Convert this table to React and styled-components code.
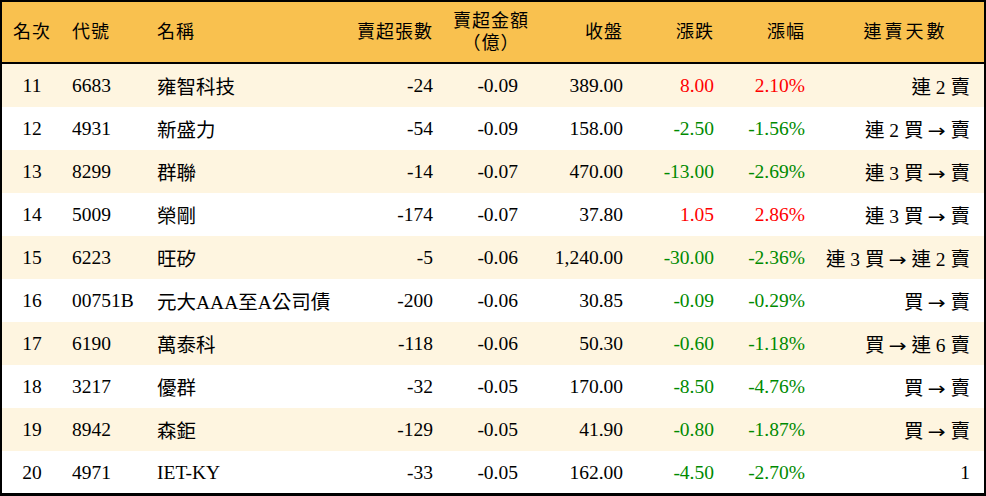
import React from "react";
import styled, { createGlobalStyle } from "styled-components";

const rows = [
    { rank: 11, code: "6683", name: "雍智科技", lots: "-24", amount: "-0.09", close: "389.00", change: "8.00", pct: "2.10%", streak: "連 2 賣" },
    { rank: 12, code: "4931", name: "新盛力", lots: "-54", amount: "-0.09", close: "158.00", change: "-2.50", pct: "-1.56%", streak: "連 2 買 → 賣" },
    { rank: 13, code: "8299", name: "群聯", lots: "-14", amount: "-0.07", close: "470.00", change: "-13.00", pct: "-2.69%", streak: "連 3 買 → 賣" },
    { rank: 14, code: "5009", name: "榮剛", lots: "-174", amount: "-0.07", close: "37.80", change: "1.05", pct: "2.86%", streak: "連 3 買 → 賣" },
    { rank: 15, code: "6223", name: "旺矽", lots: "-5", amount: "-0.06", close: "1,240.00", change: "-30.00", pct: "-2.36%", streak: "連 3 買 → 連 2 賣" },
    { rank: 16, code: "00751B", name: "元大AAA至A公司債", lots: "-200", amount: "-0.06", close: "30.85", change: "-0.09", pct: "-0.29%", streak: "買 → 賣" },
    { rank: 17, code: "6190", name: "萬泰科", lots: "-118", amount: "-0.06", close: "50.30", change: "-0.60", pct: "-1.18%", streak: "買 → 連 6 賣" },
    { rank: 18, code: "3217", name: "優群", lots: "-32", amount: "-0.05", close: "170.00", change: "-8.50", pct: "-4.76%", streak: "買 → 賣" },
    { rank: 19, code: "8942", name: "森鉅", lots: "-129", amount: "-0.05", close: "41.90", change: "-0.80", pct: "-1.87%", streak: "買 → 賣" },
    { rank: 20, code: "4971", name: "IET-KY", lots: "-33", amount: "-0.05", close: "162.00", change: "-4.50", pct: "-2.70%", streak: "1" },
];

const widths = [60, 85, 196, 100, 100, 90, 91, 91, 169];

function tone(v) {
    return v.startsWith("-") ? "down" : "up";
}

function Streak({ text }) {
    const parts = text.split(" → ");
    return parts.map((p, i) => (
        <React.Fragment key={i}>
            {i > 0 && <Arrow>→</Arrow>}
            {p}
        </React.Fragment>
    ));
}

function App() {
    return (
        <>
            <GlobalStyle />
            <Frame>
                <Table>
                    <colgroup>
                        {widths.map((w, i) => (
                            <col key={i} style={{ width: w }} />
                        ))}
                    </colgroup>
                    <thead>
                        <tr>
                            <HeadCell $align="center">名次</HeadCell>
                            <HeadCell>代號</HeadCell>
                            <HeadCell>名稱</HeadCell>
                            <HeadCell $align="right">賣超張數</HeadCell>
                            <HeadCell $align="center" $pr={14}>
                                賣超金額
                                <br />
                                （億）
                            </HeadCell>
                            <HeadCell $align="right">收盤</HeadCell>
                            <HeadCell $align="right">漲跌</HeadCell>
                            <HeadCell $align="right">漲幅</HeadCell>
                            <HeadCell $align="center" $pl={22} $wide>連賣天數</HeadCell>
                        </tr>
                    </thead>
                    <tbody>
                        {rows.map((r, i) => (
                            <Row key={r.rank} $shade={i % 2 === 0}>
                                <Cell $align="center">{r.rank}</Cell>
                                <Cell>{r.code}</Cell>
                                <Cell>{r.name}</Cell>
                                <Cell $align="right">{r.lots}</Cell>
                                <Cell $align="right" $pr={25}>{r.amount}</Cell>
                                <Cell $align="right">{r.close}</Cell>
                                <Cell $align="right" $tone={tone(r.change)}>{r.change}</Cell>
                                <Cell $align="right" $tone={tone(r.pct)}>{r.pct}</Cell>
                                <Cell $align="right" $pr={14}>
                                    <Streak text={r.streak} />
                                </Cell>
                            </Row>
                        ))}
                    </tbody>
                </Table>
            </Frame>
        </>
    );
}

const GlobalStyle = createGlobalStyle`
    body {
        margin: 0;
        background: #fff;
        font-family: "Liberation Serif", "Noto Sans CJK TC", serif;
    }
`;

const Frame = styled.div`
    width: 986px;
    height: 496px;
    box-sizing: border-box;
    border: 2px solid #000;
    border-bottom-width: 3px;
    overflow: hidden;
`;

const Table = styled.table`
    width: 100%;
    table-layout: fixed;
    border-collapse: separate;
    border-spacing: 0;
    font-size: 19.5px;
    color: #000;
`;

const HeadCell = styled.th`
    height: 60px;
    padding: 0 ${(p) => p.$pr ?? 10}px 0 ${(p) => p.$pl ?? 10}px;
    background: #f9c14f;
    border-bottom: 2px solid #000;
    font-weight: normal;
    font-size: 18px;
    line-height: 22px;
    letter-spacing: ${(p) => (p.$wide ? 3 : 1)}px;
    text-align: ${(p) => p.$align || "left"};
    white-space: nowrap;
`;

const Row = styled.tr`
    height: 43px;
    background: ${(p) => (p.$shade ? "#fef5e0" : "#fff")};
`;

const Cell = styled.td`
    padding: 0 ${(p) => p.$pr ?? 10}px 0 10px;
    text-align: ${(p) => p.$align || "left"};
    white-space: nowrap;
    color: ${(p) =>
        p.$tone === "up" ? "#f00" : p.$tone === "down" ? "#008a00" : "#000"};
`;

const Arrow = styled.span`
    display: inline-block;
    margin: 0 6px;
    font-family: "DejaVu Sans", sans-serif;
    font-size: 18px;
    transform: scaleX(1.2);
`;

export default App;
